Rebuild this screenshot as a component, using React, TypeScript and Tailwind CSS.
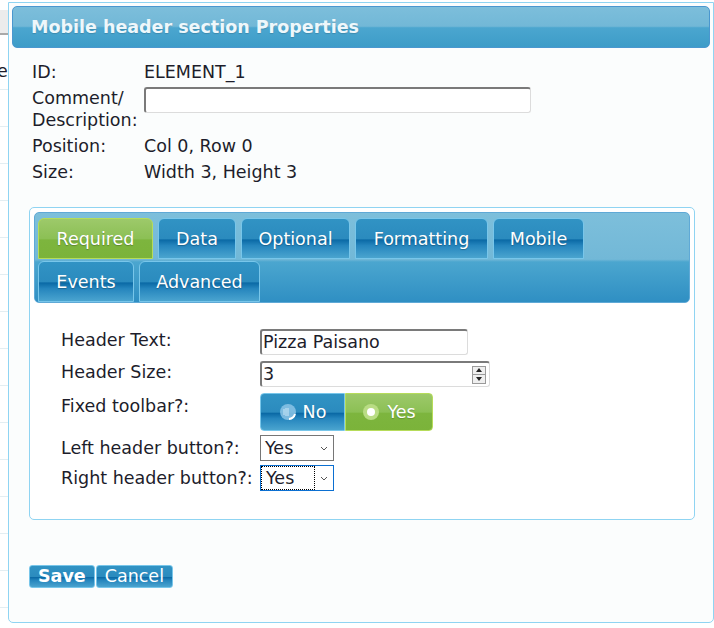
const blueTab =
  'bg-[linear-gradient(180deg,#3193c4_0%,#2b8bbe_50%,#0b6aa6_54%,#2585bd_68%,#4aa4cf_100%)] border border-[#78c6ea]'
const greenTab =
  'bg-[linear-gradient(180deg,#9dc96a_0%,#8cc055_50%,#7db53e_54%,#7bb33a_100%)] border border-[#b6dc5a]'

const Tab = ({ label, width, active = false }: { label: string; width: string; active?: boolean }) => (
  <div
    className={`h-[41px] ${width} flex items-center justify-center pt-[2px] rounded-t-[6px] text-white [text-shadow:0_1px_1px_rgba(0,0,0,0.25)] ${
      active ? greenTab : blueTab
    }`}
  >
    {label}
  </div>
)

const Chevron = () => (
  <svg width="8" height="5" viewBox="0 0 8 5" className="shrink-0">
    <path d="M1 1l3 3L7 1" fill="none" stroke="#555" strokeWidth="1" />
  </svg>
)

const Select = ({ focused = false }: { focused?: boolean }) => (
  <div
    className={`w-[74px] h-[26px] flex items-center bg-white border ${
      focused ? 'border-[#0b6fd1]' : 'border-[#767676]'
    }`}
  >
    <div
      className={`flex-1 h-full flex items-center pl-[4px] ${
        focused ? 'border border-dotted border-black' : ''
      }`}
    >
      Yes
    </div>
    <div className="w-[18px] flex justify-center">
      <Chevron />
    </div>
  </div>
)

const Row = ({ label, children }: { label: string; children: React.ReactNode }) => (
  <>
    <div className="leading-[22px]">{label}</div>
    <div>{children}</div>
  </>
)

export default function App() {
  return (
    <div className="relative w-[714px] h-[628px] overflow-hidden bg-white font-['DejaVu_Sans',Verdana,sans-serif] text-[17.5px] text-[#1d1d2b]">
      {/* page behind the dialog */}
      <div className="absolute inset-0">
        <div className="h-[10px]" />
        <div className="h-[25px] bg-[#ececec] border-b-2 border-[#a9a9a9]" />
        <div className="grid grid-cols-[repeat(9,88px)] -ml-[8px] pt-[18px]">
          {Array.from({ length: 135 }).map((_, i) => (
            <div key={i} className="h-[37px] border-r border-b border-[#e3eef2]" />
          ))}
        </div>
        <div className="absolute left-0 top-[58px] text-[17.5px] -ml-[3px]">e</div>
      </div>

      {/* dialog */}
      <div className="absolute left-[8px] top-[2px] w-[706px] h-[621px] bg-[#fbfdfd] border border-[#8fd4f2] rounded-b-[5px] p-[3px] flex flex-col">
        <div className="h-[42px] rounded-[5px] border border-[#4a97cf] bg-[linear-gradient(180deg,#7cbedb_0%,#72b8d7_48%,#4ba6cf_52%,#3d9cc8_100%)] flex items-center pl-[18px] font-bold text-[#eef7fb] [text-shadow:0_1px_1px_rgba(0,0,0,0.15)]">
          Mobile header section Properties
        </div>

        <div className="pl-[20px] pt-[13px] grid grid-cols-[112px_1fr] gap-y-[4px] leading-[22px]">
          <div>ID:</div>
          <div>ELEMENT_1</div>
          <div className="flex flex-col">
            <span>Comment/</span>
            <span>Description:</span>
          </div>
          <div>
            <input
              className="w-[387px] h-[26px] rounded-[3px] bg-white border-t-2 border-l-2 border-r border-b border-t-[#7a7a7a] border-l-[#7a7a7a] border-r-[#dcdcdc] border-b-[#dcdcdc] outline-none"
              defaultValue=""
            />
          </div>
          <div>Position:</div>
          <div>Col 0, Row 0</div>
          <div>Size:</div>
          <div>Width 3, Height 3</div>
        </div>

        <div className="mt-[24px] ml-[17px] w-[666px] h-[313px] border border-[#8fd4f2] rounded-[5px] bg-white p-[4px]">
          <div className="rounded-[5px] border border-[#5fa9d6] bg-[linear-gradient(180deg,#7dbfdb_0%,#72b8d7_52%,#4ba6cf_55%,#2f8fc3_100%)] pl-[3px] pt-[5px] flex flex-col gap-[2px]">
            <div className="flex gap-[5px]">
              <Tab label="Required" width="w-[115px]" active />
              <Tab label="Data" width="w-[78px]" />
              <Tab label="Optional" width="w-[109px]" />
              <Tab label="Formatting" width="w-[133px]" />
              <Tab label="Mobile" width="w-[91px]" />
            </div>
            <div className="flex gap-[5px]">
              <Tab label="Events" width="w-[96px]" />
              <Tab label="Advanced" width="w-[121px]" />
            </div>
          </div>

          <div className="pl-[27px] pt-[26px] grid grid-cols-[199px_1fr] gap-y-[6px]">
            <Row label="Header Text:">
              <div className="w-[208px] h-[26px] rounded-[3px] bg-white border-t-2 border-l-2 border-r border-b border-t-[#7a7a7a] border-l-[#7a7a7a] border-r-[#dcdcdc] border-b-[#dcdcdc] flex items-center pl-[1px]">
                Pizza Paisano
              </div>
            </Row>
            <Row label="Header Size:">
              <div className="w-[230px] h-[26px] rounded-[3px] bg-white border-t-2 border-l-2 border-r border-b border-t-[#7a7a7a] border-l-[#7a7a7a] border-r-[#dcdcdc] border-b-[#dcdcdc] flex items-center pl-[1px] pr-[3px]">
                <span className="flex-1">3</span>
                <div className="w-[14px] h-[18px] border border-[#9a9a9a] bg-[#efefef] flex flex-col">
                  <div className="flex-1 flex items-center justify-center border-b border-[#9a9a9a]">
                    <svg width="6" height="4" viewBox="0 0 6 4">
                      <path d="M0 4L3 0L6 4Z" fill="#222" />
                    </svg>
                  </div>
                  <div className="flex-1 flex items-center justify-center">
                    <svg width="6" height="4" viewBox="0 0 6 4">
                      <path d="M0 0L3 4L6 0Z" fill="#222" />
                    </svg>
                  </div>
                </div>
              </div>
            </Row>
            <div className="leading-[22px] pt-[2px]">Fixed toolbar?:</div>
            <div>
              <div className="flex h-[38px] w-[173px] text-white [text-shadow:0_1px_1px_rgba(0,0,0,0.2)]">
                <div className={`w-[85px] rounded-l-[4px] flex items-center justify-center gap-[6px] ${blueTab}`}>
                  <svg width="18" height="18" viewBox="0 0 18 18">
                    <circle cx="9" cy="9" r="8" fill="#8cc4e6" fillOpacity="0.85" />
                    <path d="M5 6v6M7 5v8M9 5v8" stroke="#cfe8f7" strokeWidth="1" />
                    <path d="M16 11a7 7 0 0 1-6 5" stroke="#fff" strokeWidth="2" fill="none" />
                  </svg>
                  <span>No</span>
                </div>
                <div className={`w-[88px] rounded-r-[4px] flex items-center justify-center gap-[7px] ${greenTab}`}>
                  <svg width="18" height="18" viewBox="0 0 18 18">
                    <circle cx="9" cy="9" r="8" fill="#b9dc84" />
                    <circle cx="9" cy="9" r="4" fill="#fff" />
                  </svg>
                  <span>Yes</span>
                </div>
              </div>
            </div>
            <div className="leading-[22px] pt-[2px] -mt-[2px]">Left header button?:</div>
            <div className="-mt-[2px]">
              <Select />
            </div>
            <div className="leading-[22px] pt-[2px] -mt-[2px]">Right header button?:</div>
            <div className="-mt-[2px]">
              <Select focused />
            </div>
          </div>
        </div>

        <div className="mt-[45px] ml-[17px] flex gap-[1px] leading-none">
          <button className={`h-[23px] px-[8px] rounded-[3px] font-bold text-white ${blueTab}`}>Save</button>
          <button className={`h-[23px] px-[8px] rounded-[3px] text-white ${blueTab}`}>Cancel</button>
        </div>
      </div>
    </div>
  )
}
